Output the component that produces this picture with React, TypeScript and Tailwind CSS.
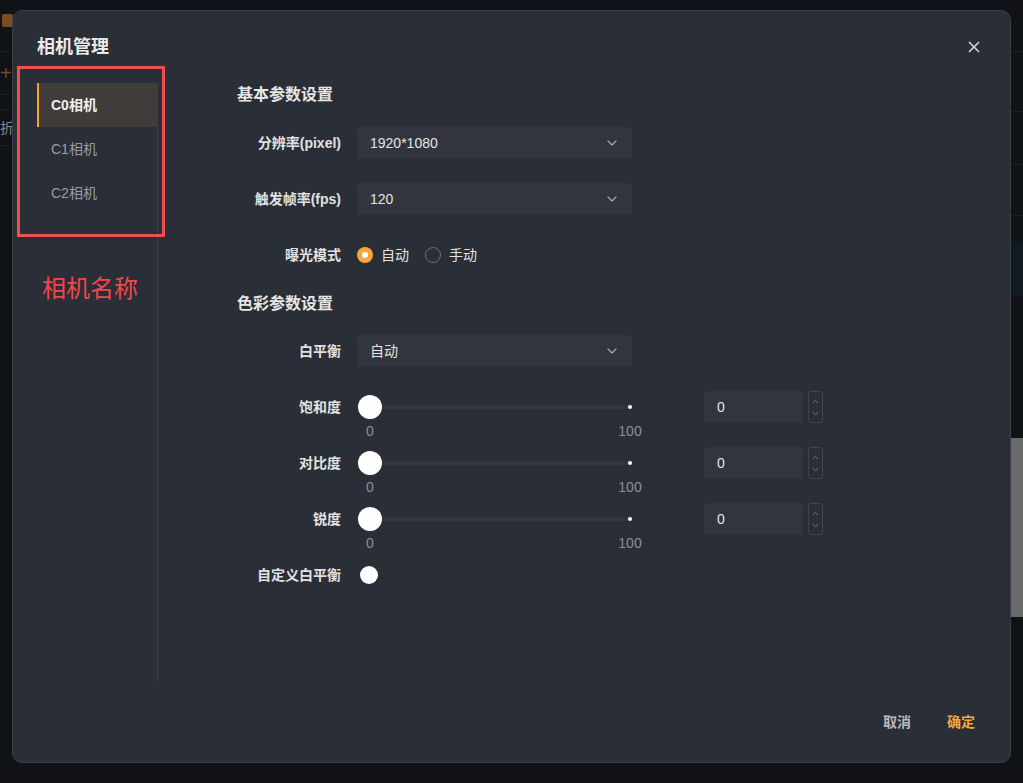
import { ChevronDown, ChevronUp, X } from "lucide-react";

const font = { fontFamily: '"Liberation Sans", "Noto Sans CJK SC", sans-serif' };

function Select({ value }: { value: string }) {
  return (
    <div className="flex h-8 w-[275px] items-center justify-between rounded bg-[#32353e] pl-[13px] pr-3 text-sm text-[#e4e4e4]">
      <span>{value}</span>
      <ChevronDown size={16} strokeWidth={1.8} className="text-[#a3a6ad]" />
    </div>
  );
}

function Row({ label, children }: { label: string; children: React.ReactNode }) {
  return (
    <div className="flex h-8 items-center">
      <div className="w-[104px] shrink-0 text-right text-sm font-bold text-[#e2e2e2]">
        {label}
      </div>
      <div className="ml-4 flex items-center">{children}</div>
    </div>
  );
}

function SliderRow({ label }: { label: string }) {
  return (
    <Row label={label}>
      <div className="relative flex h-8 w-[285px] items-center">
        <div className="ml-[12px] h-[4px] w-[261px] rounded-full bg-[#33363f]" />
        <div className="absolute left-[271px] top-[14px] h-[4px] w-[4px] rounded-full bg-white" />
        <div className="absolute left-[1px] top-1 h-6 w-6 rounded-full bg-white" />
        <span className="absolute left-[3px] top-[30px] w-[20px] text-center text-sm text-[#8d9097]">
          0
        </span>
        <span className="absolute left-[253px] top-[30px] w-[40px] text-center text-sm text-[#8d9097]">
          100
        </span>
      </div>
      <div className="ml-[62px] flex h-8 items-center">
        <div className="flex h-8 w-[99px] items-center rounded bg-[#32353e] pl-[13px] text-sm text-[#e4e4e4]">
          0
        </div>
        <div className="ml-[5px] flex h-8 w-[15px] flex-col items-center justify-center gap-[3px] rounded-[3px] border border-[#41444d]">
          <ChevronUp size={9} strokeWidth={2} className="text-[#8a8d94]" />
          <ChevronDown size={9} strokeWidth={2} className="text-[#8a8d94]" />
        </div>
      </div>
    </Row>
  );
}

function Background() {
  return (
    <div className="flex h-[783px] w-full bg-[#111217]">
      <div className="w-[200px] shrink-0">
        <div className="flex h-[52px] items-start border-b border-[#1c1e23] pt-[14px] pl-[2px]">
          <div className="h-[13px] w-[11px] rounded-[2px] bg-[#7a4d1e]" />
        </div>
        <div className="flex h-[43px] items-center border-b border-[#1c1e23] text-[20px] text-[#6b5128]">
          +
        </div>
        <div className="h-[15px] border-b border-[#1c1e23]" />
        <div className="flex h-[36px] items-center border-b border-[#1c1e23] text-sm text-[#8a8a8a]">
          折线
        </div>
      </div>
      <div className="flex-1" />
      <div className="flex w-[60px] shrink-0 flex-col">
        <div className="h-[52px] border-b border-[#1c1e23]" />
        <div className="h-[60px] border-b border-[#1c1e23]" />
        <div className="h-[53px] border-b border-[#1c1e23]" />
        <div className="h-[51px] border-b border-[#1c1e23]" />
        <div className="h-[25px]" />
        <div className="h-[55px] bg-[#101a20]" />
        <div className="h-[142px]" />
        <div className="h-[179px] bg-[#6a6a6a]" />
      </div>
    </div>
  );
}

export default function App() {
  return (
    <div className="relative h-[783px] w-full overflow-hidden" style={font}>
      <Background />
      <div className="absolute left-[12px] top-[10px] flex h-[753px] w-[999px] flex-col rounded-[10px] border border-[#3a3e47] bg-[#2a2e37]">
        <div className="flex h-[72px] shrink-0 items-center justify-between pl-[24px] pr-[27px]">
          <h1 className="text-[18px] font-bold text-[#eaeaea]">相机管理</h1>
          <X size={18} strokeWidth={2.2} className="text-[#d4d4d4]" />
        </div>
        <div className="flex h-[600px] shrink-0 pl-[24px]">
          <nav className="w-[121px] shrink-0 border-r border-[#3a3e47]">
            <div className="flex h-[44px] items-center border-l-2 border-[#f5a524] bg-[#403c39] pl-[12px] text-sm font-bold text-[#f0f0f0]">
              C0相机
            </div>
            <div className="flex h-[44px] items-center pl-[14px] text-sm text-[#999ca3]">
              C1相机
            </div>
            <div className="flex h-[44px] items-center pl-[14px] text-sm text-[#999ca3]">
              C2相机
            </div>
          </nav>
          <div className="ml-[79px] flex flex-col">
            <h2 className="flex h-6 items-center text-base font-bold text-[#e6e6e6]">
              基本参数设置
            </h2>
            <div className="mt-5 flex flex-col gap-6">
              <Row label="分辨率(pixel)">
                <Select value="1920*1080" />
              </Row>
              <Row label="触发帧率(fps)">
                <Select value="120" />
              </Row>
              <Row label="曝光模式">
                <div className="flex items-center text-sm text-[#e2e2e2]">
                  <span className="flex h-4 w-4 items-center justify-center rounded-full bg-[#f5a83a]">
                    <span className="h-[6px] w-[6px] rounded-full bg-white" />
                  </span>
                  <span className="ml-2">自动</span>
                  <span className="ml-[16px] h-4 w-4 rounded-full border border-[#6b6e75]" />
                  <span className="ml-2">手动</span>
                </div>
              </Row>
            </div>
            <h2 className="mt-[21px] flex h-6 items-center text-base font-bold text-[#e6e6e6]">
              色彩参数设置
            </h2>
            <div className="mt-[19px] flex flex-col gap-6">
              <Row label="白平衡">
                <Select value="自动" />
              </Row>
              <SliderRow label="饱和度" />
              <SliderRow label="对比度" />
              <SliderRow label="锐度" />
              <Row label="自定义白平衡">
                <div className="ml-[3px] h-[18px] w-[18px] rounded-full bg-white" />
              </Row>
            </div>
          </div>
        </div>
        <div className="flex flex-1 items-center justify-end gap-9 pr-[35px] pb-[1px] text-sm font-bold">
          <span className="text-[#bababa]">取消</span>
          <span className="text-[#f5a83a]">确定</span>
        </div>
      </div>
      <div className="pointer-events-none absolute left-[17px] top-[66px] h-[171px] w-[148px] border-[3px] border-[#f24e4e]" />
      <div className="absolute left-[42px] top-[273px] text-[24px] leading-8 text-[#f04848]">
        相机名称
      </div>
    </div>
  );
}
